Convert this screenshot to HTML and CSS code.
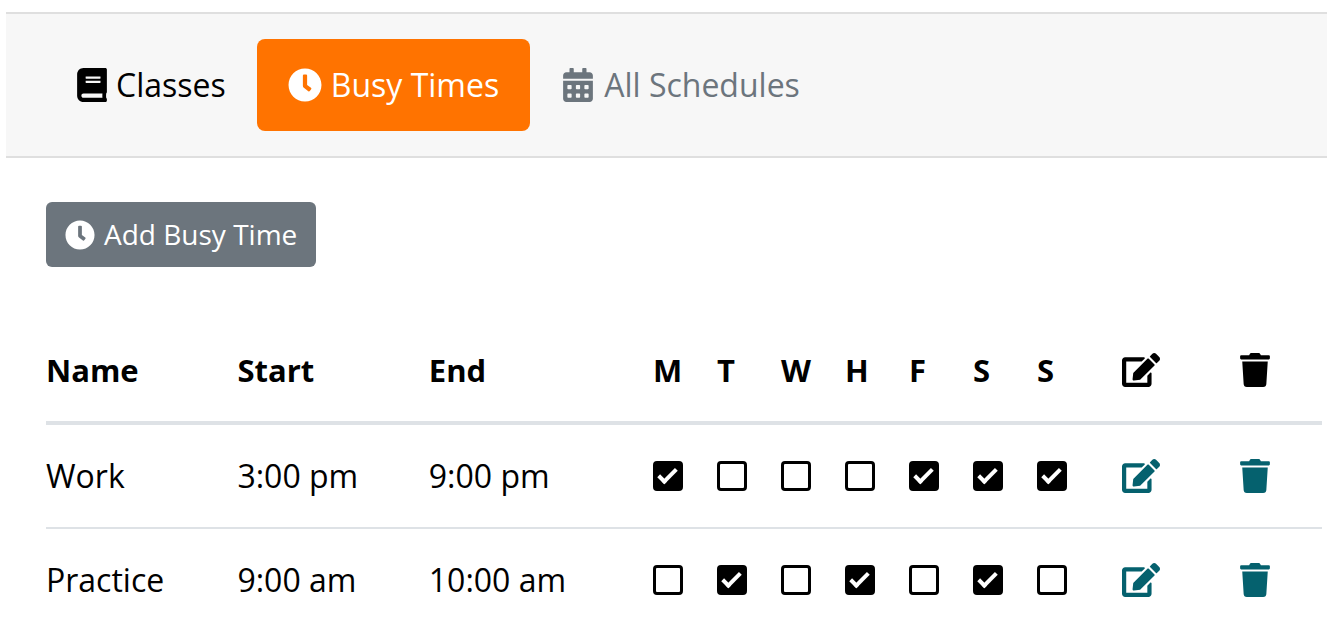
FILE: index.html
```html
<!DOCTYPE html>
<html lang="en">
<head>
    <meta charset="UTF-8">
    <meta name="viewport" content="width=device-width, initial-scale=1">
    <title>Busy Times</title>
    <link rel="stylesheet" href="styles.css">
</head>
<body>

<!-- shared icons -->
<svg class="sprite" aria-hidden="true">
    <symbol id="book" viewBox="0 0 448 512"><path d="M448 360V24c0-13.300-10.700-24-24-24H96C43 0 0 43 0 96v320c0 53 43 96 96 96h328c13.300 0 24-10.700 24-24v-16c0-7.500-3.500-14.300-8.900-18.700-4.200-15.400-4.200-59.300 0-74.700 5.400-4.300 8.900-11.100 8.900-18.600zM128 134c0-3.300 2.700-6 6-6h212c3.300 0 6 2.700 6 6v20c0 3.300-2.700 6-6 6H134c-3.300 0-6-2.700-6-6v-20zm0 64c0-3.300 2.700-6 6-6h212c3.300 0 6 2.700 6 6v20c0 3.300-2.700 6-6 6H134c-3.300 0-6-2.700-6-6v-20zm253.400 250H96c-17.700 0-32-14.300-32-32 0-17.600 14.400-32 32-32h285.400c-1.900 17.100-1.900 46.900 0 64z"/></symbol>
    <symbol id="clock" viewBox="0 0 512 512"><path d="M256 8C119 8 8 119 8 256s111 248 248 248 248-111 248-248S393 8 256 8zm92.490 313l-20 25a16 16 0 0 1-22.490 2.500l-67-49.720a40 40 0 0 1-15-31.230V112a16 16 0 0 1 16-16h32a16 16 0 0 1 16 16v144l58 42.500a16 16 0 0 1 2.490 22.500z"/></symbol>
    <symbol id="calendar" viewBox="0 0 448 512"><path fill-rule="evenodd" d="M0 160v-48c0-26.500 21.500-48 48-48h48V12c0-6.600 5.400-12 12-12h40c6.600 0 12 5.400 12 12v52h128V12c0-6.600 5.400-12 12-12h40c6.600 0 12 5.400 12 12v52h48c26.500 0 48 21.500 48 48v48zM0 192h448v272c0 26.500-21.500 48-48 48H48c-26.500 0-48-21.500-48-48zM76 256a12 12 0 0 0-12 12v40a12 12 0 0 0 12 12h40a12 12 0 0 0 12-12v-40a12 12 0 0 0-12-12zM204 256a12 12 0 0 0-12 12v40a12 12 0 0 0 12 12h40a12 12 0 0 0 12-12v-40a12 12 0 0 0-12-12zM332 256a12 12 0 0 0-12 12v40a12 12 0 0 0 12 12h40a12 12 0 0 0 12-12v-40a12 12 0 0 0-12-12zM76 384a12 12 0 0 0-12 12v40a12 12 0 0 0 12 12h40a12 12 0 0 0 12-12v-40a12 12 0 0 0-12-12zM204 384a12 12 0 0 0-12 12v40a12 12 0 0 0 12 12h40a12 12 0 0 0 12-12v-40a12 12 0 0 0-12-12zM332 384a12 12 0 0 0-12 12v40a12 12 0 0 0 12 12h40a12 12 0 0 0 12-12v-40a12 12 0 0 0-12-12z"/></symbol>
    <symbol id="edit" viewBox="0 0 576 512"><path d="M402.600 83.200l90.200 90.200c3.800 3.800 3.800 10 0 13.800L274.400 405.600l-92.800 10.300c-12.400 1.400-22.900-9.100-21.500-21.500l10.300-92.800L388.800 83.200c3.800-3.800 10-3.800 13.800 0zm162-22.900l-48.800-48.800c-15.200-15.200-39.900-15.200-55.200 0l-35.400 35.400c-3.800 3.800-3.800 10 0 13.800l90.200 90.200c3.800 3.800 10 3.800 13.800 0l35.400-35.400c15.200-15.300 15.200-40 0-55.200zM384 346.200V448H64V128h229.800c3.200 0 6.200-1.300 8.500-3.500l40-40c7.600-7.600 2.200-20.500-8.500-20.500H48C21.500 64 0 85.500 0 112v352c0 26.500 21.500 48 48 48h352c26.500 0 48-21.500 48-48V306.200c0-10.700-12.900-16-20.500-8.500l-40 40c-2.200 2.300-3.500 5.300-3.500 8.500z"/></symbol>
    <symbol id="trash" viewBox="0 0 448 512"><path d="M432 32H312l-9.400-18.700A24 24 0 0 0 281.100 0H166.800a23.720 23.720 0 0 0-21.400 13.300L136 32H16A16 16 0 0 0 0 48v32a16 16 0 0 0 16 16h416a16 16 0 0 0 16-16V48a16 16 0 0 0-16-16zM53.200 467a48 48 0 0 0 47.900 45h245.800a48 48 0 0 0 47.900-45L416 128H32z"/></symbol>
</svg>

<nav class="tabs">
    <a class="tab" href="#classes"><svg class="icon narrow"><use href="#book"/></svg>Classes</a>
    <a class="tab active" href="#busy"><svg class="icon"><use href="#clock"/></svg>Busy Times</a>
    <a class="tab muted" href="#schedules"><svg class="icon"><use href="#calendar"/></svg>All Schedules</a>
</nav>

<main class="content">
    <button class="add-btn" type="button"><svg class="icon small"><use href="#clock"/></svg>Add Busy Time</button>

    <table class="busy-table">
        <colgroup>
            <col class="col-text">
            <col class="col-text">
            <col>
            <col class="col-day" span="6">
            <col class="col-last-day">
            <col class="col-edit">
            <col class="col-delete">
        </colgroup>
        <thead>
            <tr>
                <th>Name</th>
                <th>Start</th>
                <th>End</th>
                <th>M</th>
                <th>T</th>
                <th>W</th>
                <th>H</th>
                <th>F</th>
                <th>S</th>
                <th>S</th>
                <th><svg class="icon wide" role="img" aria-label="Edit"><use href="#edit"/></svg></th>
                <th><svg class="icon narrow" role="img" aria-label="Delete"><use href="#trash"/></svg></th>
            </tr>
        </thead>
        <tbody>
            <tr>
                <td>Work</td>
                <td>3:00 pm</td>
                <td>9:00 pm</td>
                <td><input type="checkbox" aria-label="Work Monday" checked></td>
                <td><input type="checkbox" aria-label="Work Tuesday"></td>
                <td><input type="checkbox" aria-label="Work Wednesday"></td>
                <td><input type="checkbox" aria-label="Work Thursday"></td>
                <td><input type="checkbox" aria-label="Work Friday" checked></td>
                <td><input type="checkbox" aria-label="Work Saturday" checked></td>
                <td><input type="checkbox" aria-label="Work Sunday" checked></td>
                <td><button class="icon-btn" type="button" aria-label="Edit Work"><svg class="icon wide"><use href="#edit"/></svg></button></td>
                <td><button class="icon-btn" type="button" aria-label="Delete Work"><svg class="icon narrow"><use href="#trash"/></svg></button></td>
            </tr>
            <tr>
                <td>Practice</td>
                <td>9:00 am</td>
                <td>10:00 am</td>
                <td><input type="checkbox" aria-label="Practice Monday"></td>
                <td><input type="checkbox" aria-label="Practice Tuesday" checked></td>
                <td><input type="checkbox" aria-label="Practice Wednesday"></td>
                <td><input type="checkbox" aria-label="Practice Thursday" checked></td>
                <td><input type="checkbox" aria-label="Practice Friday"></td>
                <td><input type="checkbox" aria-label="Practice Saturday" checked></td>
                <td><input type="checkbox" aria-label="Practice Sunday"></td>
                <td><button class="icon-btn" type="button" aria-label="Edit Practice"><svg class="icon wide"><use href="#edit"/></svg></button></td>
                <td><button class="icon-btn" type="button" aria-label="Delete Practice"><svg class="icon narrow"><use href="#trash"/></svg></button></td>
            </tr>
        </tbody>
    </table>
</main>

</body>
</html>
```
FILE: styles.css
```css
*,
*::before {
    box-sizing: border-box;
}

body {
    margin: 0;
    padding: 12px 9px 0 6px;
    font-family: "Open Sans", "Noto Sans", sans-serif;
    font-size: 32px;
    line-height: 48px;
    color: #000;
    background: #fff;
}

.sprite {
    display: none;
}

.icon {
    width: 34px;
    height: 34px;
    flex: none;
    fill: currentColor;
}

.icon.narrow {
    width: 30px;
}

.icon.wide {
    width: 38px;
}

.icon.small {
    width: 30px;
    height: 30px;
}

.tabs {
    display: flex;
    padding: 25px 40px;
    background: #f7f7f7;
    border-top: 2px solid #dfdfdf;
    border-bottom: 2px solid #dfdfdf;
}

.tab {
    display: flex;
    align-items: center;
    gap: 9px;
    padding: 22px 31px;
    border-radius: 8px;
    color: #000;
    text-decoration: none;
    white-space: nowrap;
}

.tab.active {
    background: #ff7300;
    color: #fff;
}

.tab.muted {
    color: #6c757d;
}

.content {
    padding: 44px 5px 0 40px;
}

.add-btn {
    display: flex;
    align-items: center;
    gap: 9px;
    margin: 0 0 52px;
    padding: 12px 19px;
    border: none;
    border-radius: 6px;
    background: #6c757d;
    color: #fff;
    font-family: inherit;
    font-size: 28px;
    line-height: 41px;
    cursor: pointer;
}

.busy-table {
    width: 100%;
    table-layout: fixed;
    border-collapse: collapse;
}

.col-text {
    width: 15%;
}

.col-day {
    width: 64px;
}

.col-last-day {
    width: 85px;
}

.col-edit {
    width: 118px;
}

.col-delete {
    width: 82px;
}

.busy-table th,
.busy-table td {
    padding: 27px 0;
    text-align: left;
    vertical-align: middle;
    white-space: nowrap;
}

.busy-table th {
    border-bottom: 4px solid #dee2e6;
    font-size: 31px;
    font-weight: bold;
}

.busy-table td {
    border-bottom: 2px solid #dee2e6;
}

.busy-table tr:last-child td {
    padding-bottom: 18px;
    border-bottom: none;
}

.busy-table thead tr:last-child th {
    padding-bottom: 27px;
}

.busy-table .icon,
.busy-table input {
    display: block;
}

input[type="checkbox"] {
    appearance: none;
    width: 30px;
    height: 30px;
    margin: 0;
    border: 3px solid #000;
    border-radius: 4px;
    background: #fff;
    cursor: pointer;
}

input[type="checkbox"]:checked {
    background: #000;
}

/* tick mark */
input[type="checkbox"]:checked::before {
    content: "";
    display: block;
    width: 19px;
    height: 10px;
    margin: 5px 2px;
    border-left: 4px solid #fff;
    border-bottom: 4px solid #fff;
    transform: rotate(-45deg);
}

.icon-btn {
    display: block;
    padding: 0;
    border: none;
    background: none;
    color: #05616e;
    cursor: pointer;
}
```
